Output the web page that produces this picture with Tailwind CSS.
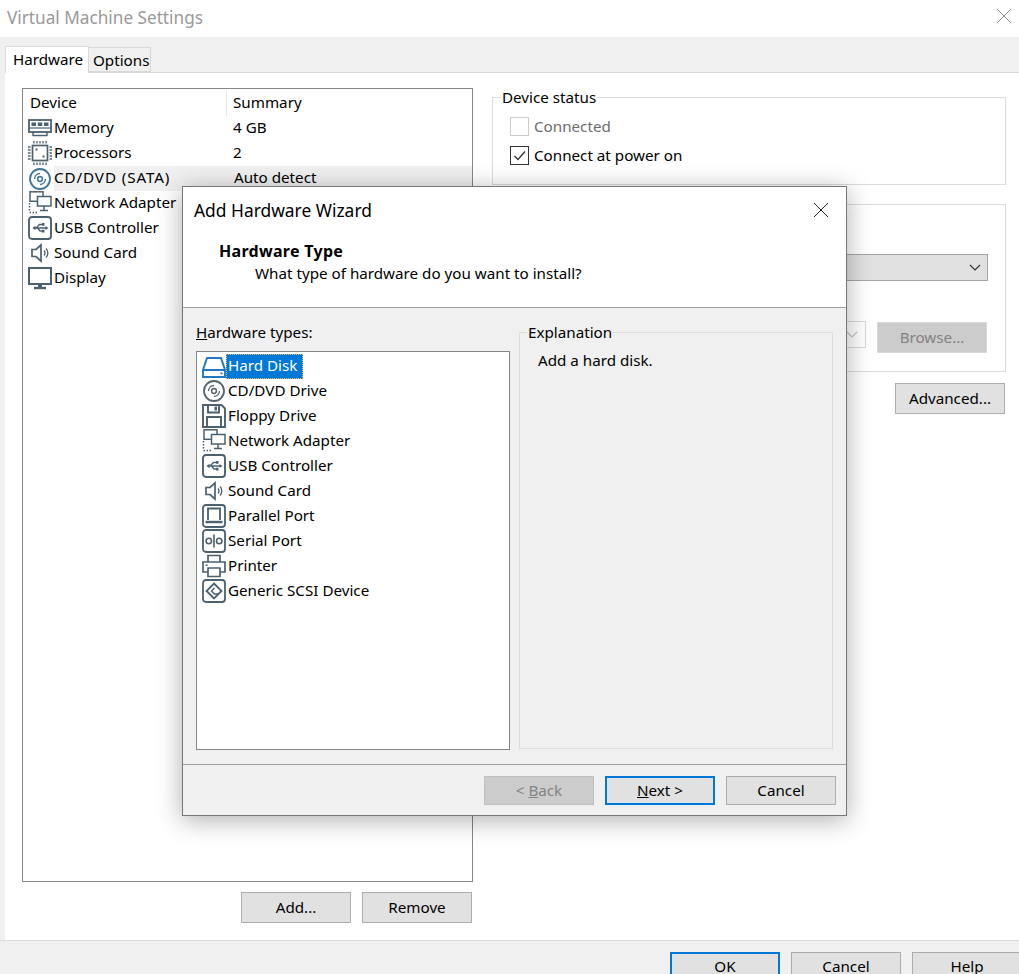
<!DOCTYPE html>
<html lang="en">
<head>
<meta charset="UTF-8">
<title>Virtual Machine Settings</title>
<script src="https://cdn.jsdelivr.net/npm/@tailwindcss/browser@4"></script>
</head>
<body class="bg-white">
<svg class="hidden">
  <defs>
    <symbol id="i-memory" viewBox="0 0 24 24"><g fill="none" stroke="#4b6070" stroke-width="1.800"><rect x="1" y="4" width="22" height="12"/><path d="M5 16v3.500h14V16" stroke-width="1.400"/></g><path d="M1 12h22" stroke="#4b6070" stroke-width="1.200"/><g fill="#4b6070"><rect x="3.500" y="6.500" width="4.500" height="3.500"/><rect x="9.800" y="6.500" width="4.500" height="3.500"/><rect x="16" y="6.500" width="4.500" height="3.500"/></g></symbol>
    <symbol id="i-cpu" viewBox="0 0 24 24"><rect x="4.500" y="4.500" width="15" height="15" fill="none" stroke="#4b6070" stroke-width="1.700"/><path d="M6 0v2.500M9 0v2.500M12 0v2.500M15 0v2.500M18 0v2.500M6 21.500V24M9 21.500V24M12 21.500V24M15 21.500V24M18 21.500V24M0 6h2.500M0 9h2.500M0 12h2.500M0 15h2.500M0 18h2.500M21.500 6H24M21.500 9H24M21.500 12H24M21.500 15H24M21.500 18H24" stroke="#4b6070" stroke-width="1.300"/><rect x="7.500" y="7.500" width="2" height="2" fill="#4b6070"/><rect x="14.500" y="14.500" width="2" height="2" fill="#4b6070"/></symbol>
    <symbol id="i-cd-on" viewBox="0 0 24 24"><g fill="none" stroke="#3f7396"><circle cx="12" cy="12" r="10" stroke-width="1.800"/><circle cx="12" cy="12" r="2.400" stroke-width="1.500"/><path d="M6.500 12A5.500 5.500 0 0 1 12 6.500M17.500 12A5.500 5.500 0 0 1 12 17.500" stroke-width="1.300"/></g></symbol>
    <symbol id="i-cd" viewBox="0 0 24 24"><g fill="none" stroke="#55646f"><circle cx="12" cy="12" r="10" stroke-width="1.800"/><circle cx="12" cy="12" r="2.400" stroke-width="1.500"/><path d="M6.500 12A5.500 5.500 0 0 1 12 6.500M17.500 12A5.500 5.500 0 0 1 12 17.500" stroke-width="1.300"/></g></symbol>
    <symbol id="i-net" viewBox="0 0 24 24"><g fill="none" stroke="#4b6070" stroke-width="1.500"><rect x="2" y="0.800" width="13" height="9.500" fill="#fff"/><rect x="9.500" y="5.500" width="13.500" height="9.500" fill="#fff"/><path d="M16 15v4M12 19.500h8"/><path d="M1.500 12v8M1.500 21.500h9" stroke-dasharray="1.500 1.500"/></g></symbol>
    <symbol id="i-usb" viewBox="0 0 24 24"><rect x="1" y="1" width="22" height="22" rx="3" fill="none" stroke="#4b6070" stroke-width="1.900"/><path d="M5.500 12h13M8 12l3.500-3.500h3M9.500 12l2.500 3h3" fill="none" stroke="#4b6070" stroke-width="1.300"/><path d="M4.500 12l3-2.200v4.400zM14 7h2.500v2.800H14zM14 13.800h2.500v2.700H14zM17.500 10l3 2-3 2z" fill="#4b6070"/></symbol>
    <symbol id="i-sound" viewBox="0 0 24 24"><g fill="none" stroke="#4b6070"><path d="M4 8.500h4L13 4v16l-5-4.500H4z" stroke-width="1.700"/><path d="M16 9.500a3.500 3.500 0 0 1 0 5M18 7.500a6.500 6.500 0 0 1 0 9" stroke-width="1.300"/></g></symbol>
    <symbol id="i-display" viewBox="0 0 24 24"><rect x="1" y="2" width="22" height="16" fill="none" stroke="#4b6070" stroke-width="2"/><path d="M6 22h12" stroke="#4b6070" stroke-width="2.400"/><path d="M10 18h4v3h-4z" fill="#4b6070"/></symbol>
    <symbol id="i-disk" viewBox="0 0 24 24"><g fill="none" stroke="#1f78c1" stroke-width="1.900"><path d="M5 3h14l4 12v7H1v-7zM1 15h22"/></g><rect x="18.500" y="17.500" width="2" height="1.800" fill="#1f78c1"/></symbol>
    <symbol id="i-floppy" viewBox="0 0 24 24"><g fill="none" stroke="#4b6070" stroke-width="1.900"><path d="M1 1h18.500L23 4.500V23H1z"/><path d="M6 1v7.500h11V1M5 23V13h14v10"/></g><rect x="12.500" y="2.500" width="2.500" height="4" fill="#4b6070"/></symbol>
    <symbol id="i-parallel" viewBox="0 0 24 24"><g fill="none" stroke="#4b6070" stroke-width="1.800"><rect x="1" y="1" width="22" height="22" rx="3"/><path d="M6 16V4.500h12V16"/><path d="M3.500 18h17" stroke-width="2.400"/></g></symbol>
    <symbol id="i-serial" viewBox="0 0 24 24"><g fill="none" stroke="#4b6070" stroke-width="1.600"><rect x="1" y="1" width="22" height="22" rx="3" stroke-width="1.800"/><circle cx="6.800" cy="12" r="2.700"/><circle cx="17.200" cy="12" r="2.700"/><path d="M12 5.500v13"/></g></symbol>
    <symbol id="i-printer" viewBox="0 0 24 24"><g fill="none" stroke="#4b6070" stroke-width="1.700"><path d="M6 8V1.500h12V8"/><path d="M6 18H1V8h22v10h-5"/><path d="M6 14h12v8.500H6z"/></g><rect x="3.500" y="10.500" width="2" height="1.500" fill="#4b6070"/></symbol>
    <symbol id="i-scsi" viewBox="0 0 24 24"><g fill="none" stroke="#4b6070" stroke-width="1.800"><rect x="1" y="1" width="22" height="22" rx="3"/><path d="M12 4.500l7.500 7.500-7.500 7.500L4.500 12z"/><path d="M12.500 9L9.500 12l3 3h4" stroke-width="1.400"/></g></symbol>
  </defs>
</svg>

<div class="relative w-[1019px] h-[974px] overflow-hidden flex flex-col text-[15.2px] leading-[25px] text-black bg-white font-['Noto_Sans','Open_Sans',sans-serif]">
  <!-- main window -->
  <div class="h-[37px] shrink-0 flex items-center justify-between pl-[7px] pr-[4px] bg-white">
    <span class="text-[17.2px] text-[#999999] -mt-[2px]">Virtual Machine Settings</span>
    <svg class="w-[16px] h-[16px] mr-[3px] mb-[6px]" viewBox="0 0 16 16"><path d="M1 1l14 14M15 1L1 15" stroke="#8c8c8c" stroke-width="1"/></svg>
  </div>

  <div class="flex-1 flex flex-col bg-[#f0f0f0] pl-[5px]">
    <div class="h-[35px] shrink-0 flex items-end">
      <div class="h-[27px] w-[84px] -mb-[1px] z-10 bg-white border border-b-0 border-[#d9d9d9] pl-[7px] leading-[24px]">Hardware</div>
      <div class="h-[25px] w-[62px] bg-[#f0f0f0] border border-l-0 border-[#d9d9d9] pl-[4px] leading-[25px]">Options</div>
    </div>
    <div class="flex-1 flex bg-white border-t border-[#d9d9d9] pl-[17px] pt-[15px]">
      <!-- device list -->
      <div class="w-[451px] shrink-0 flex flex-col">
        <div class="h-[794px] border border-[#82878c] pt-[2px] leading-[22px]">
          <div class="flex h-[25px]">
            <div class="w-[204px] pl-[7px] border-r border-[#e5e5e5]">Device</div>
            <div class="pl-[6px]">Summary</div>
          </div>
          <div class="flex h-[25px]"><div class="w-[205px] flex items-center pb-[2px] pl-[5px] leading-[25px]"><svg class="w-[24px] h-[24px] mr-[2px] self-start"><use href="#i-memory"/></svg>Memory</div><div class="pl-[5px]">4 GB</div></div>
          <div class="flex h-[25px]"><div class="w-[205px] flex items-center pb-[2px] pl-[5px] leading-[25px]"><svg class="w-[24px] h-[24px] mr-[2px] self-start"><use href="#i-cpu"/></svg>Processors</div><div class="pl-[5px]">2</div></div>
          <div class="flex h-[25px]"><div class="w-[205px] flex items-center pl-[5px]"><svg class="w-[24px] h-[24px] mr-[2px]"><use href="#i-cd-on"/></svg><span class="bg-[#f0f0f0] flex-1 h-[25px] tracking-[0.9px]">CD/DVD (SATA)</span></div><div class="pl-[6px] flex-1 bg-[#f0f0f0]">Auto detect</div></div>
          <div class="flex h-[25px]"><div class="w-[205px] flex items-center pb-[2px] pl-[5px] leading-[25px]"><svg class="w-[24px] h-[24px] mr-[2px] self-start"><use href="#i-net"/></svg>Network Adapter</div></div>
          <div class="flex h-[25px]"><div class="w-[205px] flex items-center pb-[2px] pl-[5px] leading-[25px]"><svg class="w-[24px] h-[24px] mr-[2px] self-start"><use href="#i-usb"/></svg>USB Controller</div></div>
          <div class="flex h-[25px]"><div class="w-[205px] flex items-center pb-[2px] pl-[5px] leading-[25px]"><svg class="w-[24px] h-[24px] mr-[2px] self-start"><use href="#i-sound"/></svg>Sound Card</div></div>
          <div class="flex h-[25px]"><div class="w-[205px] flex items-center pb-[2px] pl-[5px] leading-[25px]"><svg class="w-[24px] h-[24px] mr-[2px] self-start"><use href="#i-display"/></svg>Display</div></div>
        </div>
        <div class="flex justify-end gap-[11px] mt-[10px] pr-[1px]">
          <div class="w-[110px] h-[31px] bg-[#e1e1e1] border border-[#adadad] flex items-center justify-center">Add...</div>
          <div class="w-[110px] h-[31px] bg-[#e1e1e1] border border-[#adadad] flex items-center justify-center">Remove</div>
        </div>
      </div>
      <!-- right side -->
      <div class="w-[514px] shrink-0 ml-[19px] -mt-[2px]">
        <fieldset class="h-[99px] border border-[#dcdcdc] pl-[17px]">
          <legend class="-ml-[9px] px-[1px] py-[1px] leading-[20px]">Device status</legend>
          <div class="flex items-center h-[29px] pb-[3px] mt-[5px] gap-[5px] text-[#6d6d6d]"><span class="w-[19px] h-[19px] self-start mt-[4px] border border-[#cccccc] bg-white"></span>Connected</div>
          <div class="flex items-center h-[29px] pb-[3px] gap-[5px]"><span class="w-[19px] h-[19px] self-start mt-[4px] border border-[#333333] bg-white flex items-center justify-center"><svg class="w-[13px] h-[13px]" viewBox="0 0 13 13"><path d="M1.500 7l3.500 3.500 7-8" fill="none" stroke="#333" stroke-width="1.300"/></svg></span>Connect at power on</div>
        </fieldset>
        <div class="h-[168px] mt-[19px] border border-[#dcdcdc] pr-[17px] pt-[49px] flex flex-col items-end">
          <div class="w-[300px] h-[27px] bg-[#e1e1e1] border border-[#a6a6a6] flex items-center justify-end pr-[6px]">
            <svg class="w-[12px] h-[8px]" viewBox="0 0 12 8"><path d="M1 1l5 5 5-5" fill="none" stroke="#333" stroke-width="1.200"/></svg>
          </div>
          <div class="flex items-start gap-[11px] mt-[40px] mr-[1px]">
            <div class="w-[200px] h-[27px] bg-white border border-[#d9d9d9] flex items-center justify-end pr-[7px]">
              <svg class="w-[12px] h-[8px]" viewBox="0 0 12 8"><path d="M1 1l5 5 5-5" fill="none" stroke="#c4c4c4" stroke-width="1.200"/></svg>
            </div>
            <div class="w-[110px] h-[31px] mt-[1px] bg-[#cccccc] border border-[#d9d9d9] text-[#838383] flex items-center justify-center">Browse...</div>
          </div>
        </div>
        <div class="flex justify-end mt-[11px] pr-[1px]">
          <div class="w-[110px] h-[31px] bg-[#e1e1e1] border border-[#adadad] flex items-center justify-center">Advanced...</div>
        </div>
      </div>
    </div>
  </div>

  <div class="h-[34px] shrink-0 bg-[#f0f0f0] border-t border-[#dcdcdc] flex gap-[11px] pl-[670px] pt-[11px]">
    <div class="w-[110px] h-[31px] pb-[2px] shrink-0 bg-[#e1e1e1] border-2 border-[#0078d7] flex items-center justify-center">OK</div>
    <div class="w-[110px] h-[31px] pb-[2px] shrink-0 bg-[#e1e1e1] border border-[#adadad] flex items-center justify-center">Cancel</div>
    <div class="w-[110px] h-[31px] pb-[2px] shrink-0 bg-[#e1e1e1] border border-[#adadad] flex items-center justify-center">Help</div>
  </div>

  <!-- wizard dialog, floats over the settings window -->
  <div class="absolute left-[182px] top-[186px] w-[665px] h-[630px] flex flex-col bg-[#f0f0f0] border border-[#777777] shadow-[0_4px_24px_rgba(0,0,0,0.32)]">
    <div class="h-[121px] shrink-0 bg-white border-b border-[#a0a0a0] relative">
      <div class="text-[17.4px] leading-[24px] pl-[11px] pt-[11px]">Add Hardware Wizard</div>
      <svg class="absolute right-[17px] top-[15px] w-[16px] h-[16px]" viewBox="0 0 16 16"><path d="M1 1l14 14M15 1L1 15" stroke="#222" stroke-width="1"/></svg>
      <div class="font-bold text-[16px] tracking-[0.3px] pl-[36px] mt-[18px] leading-[22px]">Hardware Type</div>
      <div class="pl-[72px] leading-[22px]">What type of hardware do you want to install?</div>
    </div>
    <div class="flex-1 flex pl-[13px] pt-[12px]">
      <div class="w-[314px] shrink-0">
        <div class="leading-[24px] h-[31px]"><span class="underline">H</span>ardware types:</div>
        <div class="h-[399px] bg-white border border-[#82878c] pl-[5px] pt-[2px]">
          <div class="flex items-center h-[25px]"><svg class="w-[24px] h-[24px] shrink-0"><use href="#i-disk"/></svg><span class="bg-[#0078d7] text-white outline-1 outline-dotted outline-offset-[-1px] outline-[#f4b860] pl-[2px] pr-[6px] h-[25px] leading-[22px]">Hard Disk</span></div>
          <div class="flex items-center pb-[2px] h-[25px]"><svg class="w-[24px] h-[24px] mr-[2px] shrink-0 self-start"><use href="#i-cd"/></svg>CD/DVD Drive</div>
          <div class="flex items-center pb-[2px] h-[25px]"><svg class="w-[24px] h-[24px] mr-[2px] shrink-0 self-start"><use href="#i-floppy"/></svg>Floppy Drive</div>
          <div class="flex items-center pb-[2px] h-[25px]"><svg class="w-[24px] h-[24px] mr-[2px] shrink-0 self-start"><use href="#i-net"/></svg>Network Adapter</div>
          <div class="flex items-center pb-[2px] h-[25px]"><svg class="w-[24px] h-[24px] mr-[2px] shrink-0 self-start"><use href="#i-usb"/></svg>USB Controller</div>
          <div class="flex items-center pb-[2px] h-[25px]"><svg class="w-[24px] h-[24px] mr-[2px] shrink-0 self-start"><use href="#i-sound"/></svg>Sound Card</div>
          <div class="flex items-center pb-[2px] h-[25px]"><svg class="w-[24px] h-[24px] mr-[2px] shrink-0 self-start"><use href="#i-parallel"/></svg>Parallel Port</div>
          <div class="flex items-center pb-[2px] h-[25px]"><svg class="w-[24px] h-[24px] mr-[2px] shrink-0 self-start"><use href="#i-serial"/></svg>Serial Port</div>
          <div class="flex items-center pb-[2px] h-[25px]"><svg class="w-[24px] h-[24px] mr-[2px] shrink-0 self-start"><use href="#i-printer"/></svg>Printer</div>
          <div class="flex items-center pb-[2px] h-[25px]"><svg class="w-[24px] h-[24px] mr-[2px] shrink-0 self-start"><use href="#i-scsi"/></svg>Generic SCSI Device</div>
        </div>
      </div>
      <fieldset class="w-[314px] h-[429px] ml-[9px] border border-[#dcdcdc] pl-[18px]">
        <legend class="-ml-[11px] px-[1px] py-[1px] leading-[22px]">Explanation</legend>
        <div class="leading-[24px] mt-[4px]">Add a hard disk.</div>
      </fieldset>
    </div>
    <div class="h-[51px] shrink-0 border-t border-[#a0a0a0] flex justify-end gap-[11px] pr-[10px] pt-[11px]">
      <div class="w-[110px] h-[29px] bg-[#cccccc] border border-[#bfbfbf] text-[#838383] flex items-center justify-center">&lt;&nbsp;<span class="underline">B</span>ack</div>
      <div class="w-[110px] h-[29px] bg-[#e1e1e1] border-2 border-[#0078d7] flex items-center justify-center"><span class="underline">N</span>ext &gt;</div>
      <div class="w-[110px] h-[29px] bg-[#e1e1e1] border border-[#adadad] flex items-center justify-center">Cancel</div>
    </div>
  </div>
</div>
</body>
</html>
